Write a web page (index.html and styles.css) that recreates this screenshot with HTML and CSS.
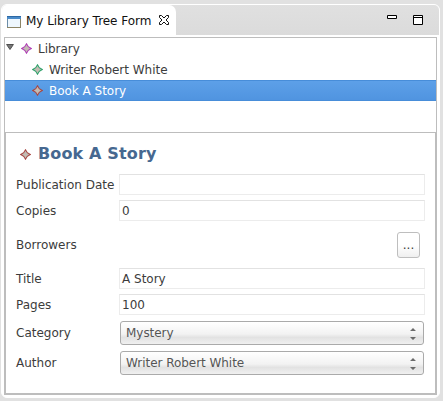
FILE: index.html
```html
<!DOCTYPE html>
<html lang="en">
<head>
<meta charset="utf-8">
<title>My Library Tree Form</title>
<link rel="stylesheet" href="styles.css">
</head>
<body>
<svg width="0" height="0" class="defs">
  <symbol id="gem" viewBox="0 0 11 11">
    <path class="gem-shape" d="M5.500 .8 7.300 3.700 10.200 5.500 7.300 7.300 5.500 10.200 3.700 7.300 .8 5.500 3.700 3.700Z"/>
  </symbol>
</svg>
<main class="panel">
  <header class="tabbar">
    <div class="tab">
      <svg class="window-icon" width="14" height="12" viewBox="0 0 14 12">
        <rect x=".5" y=".5" width="13" height="11" fill="#eef7fe" stroke="#8c8466"/>
        <path d="M0 0h14v3H0z" fill="#4a8bc9"/><path d="M0 .5h14" stroke="#2c68a4"/>
        <path d="M.5 3v8" stroke="#6c8da8"/>
      </svg>
      <span class="tab-title">My Library Tree Form</span>
      <svg class="close-icon" width="10" height="10" viewBox="0 0 10 10">
        <path d="M.5 .5h2L5 3 7.500 .5h2v2L7 5l2.500 2.500v2h-2L5 7 2.500 9.500h-2v-2L3 5 .5 2.500Z" fill="#fff" stroke="#111"/>
      </svg>
    </div>
    <div class="controls">
      <svg width="10" height="4" viewBox="0 0 10 4"><path d="M.5 .5h9v3h-9z" fill="#fff" stroke="#000"/></svg>
      <svg width="10" height="10" viewBox="0 0 10 10"><path d="M.5 .5h9v9h-9zM1 2.500h8" fill="#fff" stroke="#000"/></svg>
    </div>
  </header>
  <section class="content">
    <div class="tree">
      <div class="node root">
        <svg class="arrow" width="8" height="6" viewBox="0 0 8 6"><path d="M.6.5h6.800L4 5.500Z" fill="#777" stroke="#505050"/></svg>
        <svg class="gem violet" width="11" height="11"><use href="#gem"/></svg>
        <span>Library</span>
      </div>
      <div class="node child">
        <svg class="gem green" width="11" height="11"><use href="#gem"/></svg>
        <span>Writer Robert White</span>
      </div>
      <div class="node child selected">
        <svg class="gem red" width="11" height="11"><use href="#gem"/></svg>
        <span>Book A Story</span>
      </div>
    </div>
    <div class="form">
      <h1><svg class="gem red" width="11" height="11"><use href="#gem"/></svg><span>Book A Story</span></h1>
      <div class="fields">
        <span class="label">Publication Date</span><div class="input"></div>
        <span class="label">Copies</span><div class="input">0</div>
        <span class="label">Borrowers</span><div class="browse">...</div>
        <span class="label">Title</span><div class="input">A Story</div>
        <span class="label">Pages</span><div class="input">100</div>
        <span class="label">Category</span>
        <div class="select"><span>Mystery</span><svg width="6" height="12" viewBox="0 0 6 12"><path d="M0 3 3 0l3 3ZM0 9h6l-3 3Z" fill="#6a6a6a"/></svg></div>
        <span class="label">Author</span>
        <div class="select"><span>Writer Robert White</span><svg width="6" height="12" viewBox="0 0 6 12"><path d="M0 3 3 0l3 3ZM0 9h6l-3 3Z" fill="#6a6a6a"/></svg></div>
      </div>
    </div>
  </section>
</main>
</body>
</html>
```
FILE: styles.css
```css
* { box-sizing: border-box; }
body {
  margin: 0;
  height: 401px;
  padding: 4px 3px 3px 1px;
  overflow: hidden;
  background: #e1e1e1;
  font: 12px/21px "DejaVu Sans", sans-serif;
  color: #3c3c3c;
}
svg { display: block; flex: none; }
.defs { position: absolute; }
.panel {
  height: 394px;
  border: 1px solid #fff;
  border-radius: 6px;
  background: #fff;
}
.tabbar {
  height: 30px;
  display: flex;
  justify-content: space-between;
  border-radius: 5px 5px 0 0;
  background: linear-gradient(#e0e0e0, #dbdbdb);
}
.tab {
  width: 174px;
  padding-left: 5px;
  display: flex;
  align-items: center;
  border-radius: 5px 7px 0 0;
  background: #fff;
  color: #111;
}
.window-icon { margin-top: 3px; }
.tab-title { margin: 2px 0 0 5px; white-space: nowrap; letter-spacing: -.04px; }
.close-icon { margin-left: 8px; }
.controls { display: flex; gap: 16px; padding: 10px 16px 0 0; }
.content {
  height: 358px;
  margin: 2px 2px 0;
  border: 1px solid #bdbdbd;
}
.tree { height: 94px; }
.node { height: 21px; display: flex; align-items: center; }
.node span { margin-left: 6px; padding-top: 2px; letter-spacing: -.02px; }
.arrow { margin: -4px 7px 0 1px; }
.child { padding-left: 27px; }
.selected {
  background: linear-gradient(#5da0e8, #5094e0);
  border-top: 1px solid #478dd9;
  border-bottom: 1px solid #478dd9;
  color: #fff;
}
.gem-shape { fill: #c3bbb3; stroke: currentColor; stroke-width: 1.1; }
.violet { color: #b03fb6; }
.green { color: #2fa36c; }
.red { color: #a84843; }
.form {
  height: 262px;
  border: 1px solid #bdbdbd;
  padding: 10px 10px 0;
}
h1 {
  height: 22px;
  margin: 0 0 9px;
  display: flex;
  align-items: center;
  font-size: 16px;
  letter-spacing: .14px;
  color: #466890;
}
h1 span { margin-top: -2px; }
h1 .gem { margin: 0 7px 0 4px; }
.fields {
  display: grid;
  grid-template-columns: 103px 306px;
  grid-template-rows: 21px 21px 37px 21px 21px 25px 25px;
  row-gap: 5px;
  align-items: center;
}
.label { padding-top: 2px; white-space: nowrap; }
.input {
  height: 21px;
  padding: 1px 0 0 2px;
  border: 1px solid #ececec;
  border-top-color: #e2e2e2;
  line-height: 19px;
}
.browse {
  width: 23px;
  height: 26px;
  margin-right: 5px;
  justify-self: end;
  border: 1px solid #bebebe;
  border-radius: 3px;
  background: linear-gradient(#fff 50%, #efefef);
  text-align: center;
  line-height: 24px;
}
.select {
  height: 24px;
  margin: 0 1px;
  align-self: end;
  padding: 0 7px 0 5px;
  display: flex;
  align-items: center;
  justify-content: space-between;
  border: 1px solid #aaa;
  border-radius: 3px;
  background: linear-gradient(#fff, #f2f2f2 55%, #e2e2e2 70%, #f0f0f0);
  color: #555;
}
.select span { letter-spacing: -.04px; }
.select svg { margin-top: 2px; }
```
